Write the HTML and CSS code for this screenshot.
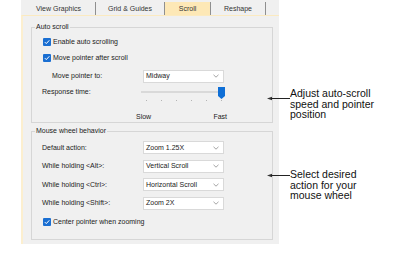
FILE: index.html
```html
<!DOCTYPE html>
<html lang="en">
	<head>
		<meta charset="UTF-8" />
		<title>Options - Scroll</title>
		<link rel="stylesheet" href="styles.css">
	</head>
	<body>
		<div class="dialog">
			<div class="tabs">
				<div class="tab tab-view">View Graphics</div>
				<div class="tab tab-grid">Grid &amp; Guides</div>
				<div class="tab tab-scroll active">Scroll</div>
				<div class="tab tab-reshape">Reshape</div>
			</div>

			<div class="panel">
				<fieldset class="group group-auto">
					<legend>Auto scroll</legend>
					<div class="rows">
						<div class="check-row">
							<svg class="checkbox" width="8" height="8" viewBox="0 0 8 8"><rect width="8" height="8" rx="1" fill="#1a6fd2"/><polyline points="1.8,4.1 3.3,5.6 6.3,2.3" fill="none" stroke="#fff" stroke-width="1"/></svg>
							<span>Enable auto scrolling</span>
						</div>
						<div class="check-row">
							<svg class="checkbox" width="8" height="8" viewBox="0 0 8 8"><rect width="8" height="8" rx="1" fill="#1a6fd2"/><polyline points="1.8,4.1 3.3,5.6 6.3,2.3" fill="none" stroke="#fff" stroke-width="1"/></svg>
							<span>Move pointer after scroll</span>
						</div>
						<div class="field-row spaced">
							<span class="field-label indent">Move pointer to:</span>
							<div class="select">
								<span>Midway</span>
								<svg width="6" height="4" viewBox="0 0 6 4"><polyline points="0.5,0.8 3,3.2 5.5,0.8" fill="none" stroke="#8c8c8c" stroke-width="0.8"/></svg>
							</div>
						</div>
						<div class="slider-row">
							<span class="field-label slider-label">Response time:</span>
							<div class="slider">
								<div class="slider-rail">
									<div class="slider-track"></div>
									<svg class="slider-thumb" width="7" height="12" viewBox="0 0 7 12"><polygon points="0,0 7,0 7,9 3.5,12 0,9" fill="#0f6fd6"/></svg>
								</div>
								<div class="slider-ticks">
									<i></i><i></i><i></i><i></i><i></i><i></i>
								</div>
								<div class="slider-scale">
									<span>Slow</span>
									<span>Fast</span>
								</div>
							</div>
						</div>
					</div>
				</fieldset>

				<fieldset class="group group-wheel">
					<legend>Mouse wheel behavior</legend>
					<div class="rows">
						<div class="field-row wheel-row">
							<span class="field-label">Default action:</span>
							<div class="select">
								<span>Zoom 1.25X</span>
								<svg width="6" height="4" viewBox="0 0 6 4"><polyline points="0.5,0.8 3,3.2 5.5,0.8" fill="none" stroke="#8c8c8c" stroke-width="0.8"/></svg>
							</div>
						</div>
						<div class="field-row wheel-row">
							<span class="field-label">While holding &lt;Alt&gt;:</span>
							<div class="select">
								<span>Vertical Scroll</span>
								<svg width="6" height="4" viewBox="0 0 6 4"><polyline points="0.5,0.8 3,3.2 5.5,0.8" fill="none" stroke="#8c8c8c" stroke-width="0.8"/></svg>
							</div>
						</div>
						<div class="field-row wheel-row">
							<span class="field-label">While holding &lt;Ctrl&gt;:</span>
							<div class="select">
								<span>Horizontal Scroll</span>
								<svg width="6" height="4" viewBox="0 0 6 4"><polyline points="0.5,0.8 3,3.2 5.5,0.8" fill="none" stroke="#8c8c8c" stroke-width="0.8"/></svg>
							</div>
						</div>
						<div class="field-row wheel-row">
							<span class="field-label">While holding &lt;Shift&gt;:</span>
							<div class="select">
								<span>Zoom 2X</span>
								<svg width="6" height="4" viewBox="0 0 6 4"><polyline points="0.5,0.8 3,3.2 5.5,0.8" fill="none" stroke="#8c8c8c" stroke-width="0.8"/></svg>
							</div>
						</div>
						<div class="check-row wheel-row">
							<svg class="checkbox" width="8" height="8" viewBox="0 0 8 8"><rect width="8" height="8" rx="1" fill="#1a6fd2"/><polyline points="1.8,4.1 3.3,5.6 6.3,2.3" fill="none" stroke="#fff" stroke-width="1"/></svg>
							<span>Center pointer when zooming</span>
						</div>
					</div>
				</fieldset>
			</div>
		</div>

		<!-- callouts sit over the dialog edge -->
		<div class="callout callout-scroll">
			<svg class="callout-arrow" width="23" height="5" viewBox="0 0 23 5"><polygon points="0,2.5 5,0.8 5,4.2" fill="#333"/><line x1="4" y1="2.5" x2="23" y2="2.5" stroke="#222" stroke-width="1"/></svg>
			<p>Adjust auto-scroll<br>speed and pointer<br>position</p>
		</div>
		<div class="callout callout-wheel">
			<svg class="callout-arrow" width="23" height="5" viewBox="0 0 23 5"><polygon points="0,2.5 5,0.8 5,4.2" fill="#333"/><line x1="4" y1="2.5" x2="23" y2="2.5" stroke="#222" stroke-width="1"/></svg>
			<p>Select desired<br>action for your<br>mouse wheel</p>
		</div>
	</body>
</html>
```

FILE: styles.css
```css
:root {
	--panel-bg: #f0f0f0;
	--cream: #fbeac0;
	--box-border: #d6d6d6;
	--text: #222222;
}

* {
	margin: 0;
	padding: 0;
	box-sizing: border-box;
}

body {
	font-family: "Liberation Sans", Arial, sans-serif;
	background-color: #ffffff;
	color: var(--text);
	width: 403px;
	height: 260px;
	overflow: hidden;
	position: relative;
}

.dialog {
	width: 258px;
	margin-left: 21px;
	font-size: 7px;
	line-height: 8px;
}

/* Tab strip */
.tabs {
	display: flex;
	height: 15px;
	padding-top: 2px;
	padding-left: 1px;
	background-color: var(--panel-bg);
}

.tab {
	height: 13px;
	display: flex;
	align-items: center;
	justify-content: center;
	border-right: 1px solid #8f8f8f;
	color: #333;
}

.tab-view { width: 74px; }
.tab-grid { width: 69px; }
.tab-scroll { width: 46px; }
.tab-reshape { width: 55px; }

.tab.active {
	background-color: #fde8b6;
}

/* Page body */
.panel {
	height: 229px;
	background-color: var(--panel-bg);
	border-top: 1px solid var(--cream);
	border-left: 2px solid #fcefcf;
	padding: 7px 7px 0 8px;
}

.group {
	width: 242px;
	border: 1px solid var(--box-border);
}

.group legend {
	margin-left: 3px;
	padding: 0 1px;
	line-height: 8px;
}

.group-wheel {
	margin-top: 4px;
}

.rows {
	display: flex;
	flex-direction: column;
	padding: 3px 0 1px 10px;
}

.group-wheel .rows {
	padding: 3.5px 0 8px 10px;
}

.check-row {
	display: flex;
	align-items: center;
	gap: 2px;
	height: 16px;
	padding-left: 1px;
}

.field-row {
	display: flex;
	align-items: center;
	height: 16px;
}

.field-row.spaced {
	margin-top: 2px;
}

.wheel-row {
	height: 18.5px;
}

.field-label {
	width: 101px;
	flex: none;
}

.field-label.indent {
	padding-left: 10px;
}

.select {
	width: 81px;
	height: 13px;
	display: flex;
	align-items: center;
	justify-content: space-between;
	padding: 0 4px 0 2px;
	background-color: #ffffff;
	border: 1px solid #d9d9d9;
	color: #1a1a1a;
}

/* Response time slider */
.slider-row {
	display: flex;
	margin-top: 2px;
}

.slider-label {
	width: 94px;
	margin-top: 2px;
}

.slider {
	width: 91px;
}

.slider-rail {
	position: relative;
	height: 14px;
	padding: 5px 0 0 5px;
}

.slider-track {
	width: 82px;
	height: 2px;
	background-color: #d9d9d9;
}

.slider-thumb {
	position: absolute;
	left: 82px;
	top: 1px;
}

.slider-ticks {
	display: flex;
	justify-content: space-between;
	width: 76px;
	height: 3px;
	margin-left: 10px;
}

.slider-ticks i {
	width: 1px;
	height: 1px;
	background-color: #b4b4b4;
}

.slider-scale {
	display: flex;
	justify-content: space-between;
	margin-top: 10px;
}

/* Annotation callouts */
.callout {
	position: absolute;
	left: 267px;
	display: flex;
	align-items: flex-start;
	font-size: 10.5px;
	line-height: 10.5px;
	color: #111111;
}

.callout-scroll {
	top: 88px;
}

.callout-wheel {
	top: 169px;
}

.callout-arrow {
	flex: none;
}

.callout-scroll .callout-arrow {
	margin-top: 8px;
}

.callout-wheel .callout-arrow {
	margin-top: 4px;
}
```
